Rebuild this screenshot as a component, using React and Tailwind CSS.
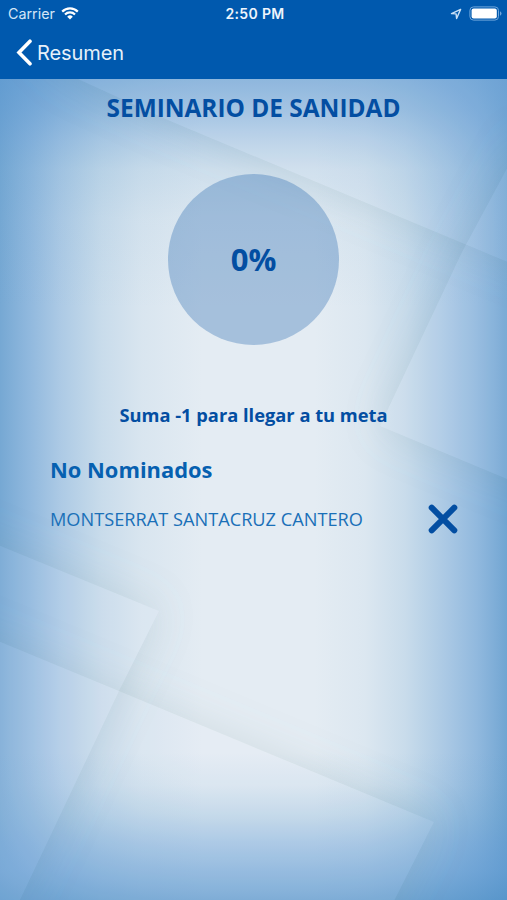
const attendees = [{ id: 1, name: "MONTSERRAT SANTACRUZ CANTERO" }];

// Translucent sheets of the backdrop, each one casts a soft shadow outside its edges
const sheets = [
  { id: "top", points: "60,70 80,80 170,121 467,245 560,284 560,0 0,0" },
  { id: "right", points: "530,126 462,252 380,426 560,501" },
  { id: "left", points: "-60,521 159,611 119,691 20,900 -10,960 -60,960" },
  { id: "bottom", points: "-60,617 119,691 434,822 392,905 360,980 -60,980" },
];

function Backdrop() {
  return (
    <svg
      className="absolute inset-0 -z-10"
      width="507"
      height="900"
      viewBox="0 0 507 900"
      aria-hidden="true"
    >
      <defs>
        <linearGradient id="sides">
          <stop offset="0" stopColor="#4f90c8" stopOpacity="0.74" />
          <stop offset="0.06" stopColor="#5a97d0" stopOpacity="0.6" />
          <stop offset="0.12" stopColor="#5a97d0" stopOpacity="0.4" />
          <stop offset="0.2" stopColor="#5a9acb" stopOpacity="0.2" />
          <stop offset="0.28" stopColor="#5a9ac8" stopOpacity="0.08" />
          <stop offset="0.4" stopColor="#5a9ac8" stopOpacity="0" />
          <stop offset="0.62" stopColor="#5a9ac8" stopOpacity="0" />
          <stop offset="0.72" stopColor="#5a9ac8" stopOpacity="0.06" />
          <stop offset="0.8" stopColor="#5a9acb" stopOpacity="0.2" />
          <stop offset="0.88" stopColor="#5a97d0" stopOpacity="0.42" />
          <stop offset="0.94" stopColor="#5a97d0" stopOpacity="0.6" />
          <stop offset="1" stopColor="#4f90c8" stopOpacity="0.77" />
        </linearGradient>
        <linearGradient id="ends" gradientUnits="userSpaceOnUse" x1="0" y1="79" x2="0" y2="900">
          <stop offset="0" stopColor="#5a97d0" stopOpacity="0.68" />
          <stop offset="0.037" stopColor="#5a97d0" stopOpacity="0.52" />
          <stop offset="0.075" stopColor="#5a97d0" stopOpacity="0.31" />
          <stop offset="0.11" stopColor="#5a9acb" stopOpacity="0.16" />
          <stop offset="0.17" stopColor="#5a9ac8" stopOpacity="0.06" />
          <stop offset="0.28" stopColor="#5a9ac8" stopOpacity="0" />
          <stop offset="0.82" stopColor="#5a9ac8" stopOpacity="0" />
          <stop offset="0.86" stopColor="#5a9ac8" stopOpacity="0.08" />
          <stop offset="0.895" stopColor="#5a9acb" stopOpacity="0.24" />
          <stop offset="0.93" stopColor="#5a97d0" stopOpacity="0.44" />
          <stop offset="0.965" stopColor="#5a97d0" stopOpacity="0.62" />
          <stop offset="1" stopColor="#4f90c8" stopOpacity="0.74" />
        </linearGradient>
        <filter id="soft" x="-50%" y="-50%" width="200%" height="200%">
          <feGaussianBlur stdDeviation="20" />
        </filter>
        {sheets.map((sheet) => (
          <clipPath key={sheet.id} id={`outside-${sheet.id}`}>
            <path
              clipRule="evenodd"
              d={`M-200-200H800V1200H-200Z M${sheet.points.split(" ").join("L")}Z`}
            />
          </clipPath>
        ))}
      </defs>
      <rect width="507" height="900" fill="#e4ecf3" />
      <rect width="507" height="900" fill="url(#sides)" />
      <rect y="79" width="507" height="821" fill="url(#ends)" />
      {sheets.map((sheet) => (
        <g key={sheet.id}>
          <g clipPath={`url(#outside-${sheet.id})`}>
            <polygon points={sheet.points} fill="#7c969c" fillOpacity="0.2" filter="url(#soft)" />
          </g>
          <polygon points={sheet.points} fill="#f0f4fe" fillOpacity="0.08" />
        </g>
      ))}
    </svg>
  );
}

function StatusBar() {
  return (
    <div className="grid h-7 grid-cols-3 items-center pr-[5px] pl-2 font-['Inter',sans-serif] text-[14px] leading-none">
      <div className="flex items-center gap-1.5">
        <span className="text-[14.3px] text-[#d3e5f7]">Carrier</span>
        <svg width="18" height="13" viewBox="0 0 18 13" fill="none" stroke="white" strokeWidth="2.2">
          <path d="M1.2 4.6a11 11 0 0 1 15.6 0" />
          <path d="M4 7.5a7 7 0 0 1 10 0" />
          <path d="M9 12.6 6.2 9.7a4 4 0 0 1 5.6 0Z" fill="white" stroke="none" />
        </svg>
      </div>
      <span className="text-center text-[14px] font-semibold tracking-[0.35px] whitespace-nowrap text-[#eef5fc]">
        2:50 PM
      </span>
      <div className="flex items-center justify-end gap-[7px] pb-px">
        <svg width="12" height="12" viewBox="0 0 12 12" fill="none" stroke="#c9e0f6" strokeWidth="1.4">
          <path d="M10.6 1.4 1.5 5.6l4.6.3L6.6 10.5Z" strokeLinejoin="round" />
        </svg>
        <svg width="33" height="15" viewBox="0 0 33 15">
          <rect x="0.9" y="0.9" width="28.6" height="13.2" rx="3.6" fill="none" stroke="#6fa6dc" />
          <rect x="2.6" y="2.6" width="25.2" height="9.8" rx="2" fill="white" />
          <path d="M31 5.3q1.5 .7 1.5 2.2t-1.5 2.2Z" fill="#6fa6dc" />
        </svg>
      </div>
    </div>
  );
}

function App() {
  return (
    <div className="relative isolate flex h-[900px] w-[507px] flex-col overflow-hidden font-['Open_Sans',sans-serif] text-[#034ea2]">
      <Backdrop />

      {/* Header */}
      <header className="h-[79px] bg-[#0059ae]">
        <StatusBar />
        <button className="flex h-[49px] items-center gap-[5px] pl-4 text-white">
          <svg width="16" height="27" viewBox="0 0 16 27" fill="none" stroke="white" strokeWidth="3.6" strokeLinecap="round">
            <path d="M14 2.2 3 13.5 14 24.8" />
          </svg>
          <span className="font-['Inter',sans-serif] text-[20px] tracking-[-0.1px] text-[#e6f0fa]">
            Resumen
          </span>
        </button>
      </header>

      <main className="flex flex-col px-[50px]">
        <h1 className="mt-[13px] text-center text-[24.4px] leading-8 font-bold whitespace-nowrap">
          SEMINARIO DE SANIDAD
        </h1>
        <div className="mt-[50px] flex size-[171px] items-center justify-center self-center rounded-full bg-[#034ea2]/28 text-[31px] font-bold">
          0%
        </div>
        <p className="mt-[56px] text-center text-[18.3px] leading-7 font-bold">
          Suma -1 para llegar a tu meta
        </p>

        <h2 className="mt-[25px] text-[21.9px] leading-8 font-bold text-[#0660b0]">No Nominados</h2>
        <ul>
          {attendees.map((person) => (
            <li key={person.id} className="-mr-px flex h-[66px] items-center justify-between text-[18.2px] text-[#1a70b8]">
              <span className="pt-px">{person.name}</span>
              <svg width="30" height="30" viewBox="0 0 30 30" stroke="#034ea2" strokeWidth="6" strokeLinecap="round">
                <path d="M3.7 3.7 26.3 26.3M26.3 3.7 3.7 26.3" />
              </svg>
            </li>
          ))}
        </ul>
      </main>
    </div>
  );
}

export default App;
